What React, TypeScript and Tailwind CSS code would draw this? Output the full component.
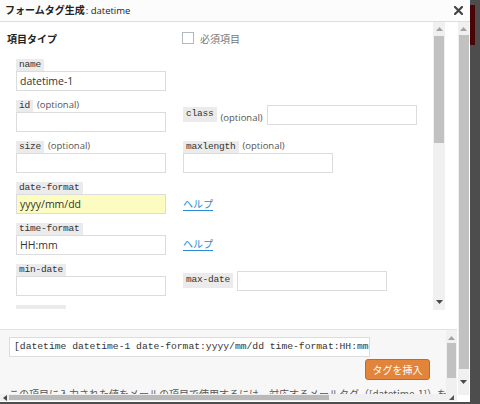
import React from 'react';

const ui = "font-['Open_Sans','Noto_Sans_CJK_JP',sans-serif]";
const jp = "font-['Noto_Sans_CJK_JP',sans-serif]";
const mono = "font-['Liberation_Mono','DejaVu_Sans_Mono',monospace]";

// small scrollbar triangle
const Arrow = ({ dir, dark }: { dir: 'up' | 'down' | 'left'; dark?: boolean }) => {
  const cls = dark ? 'fill-[#4a4a4a]' : 'fill-[#a3a3a3]';
  if (dir === 'left') {
    return (
      <svg width="4" height="6" viewBox="0 0 4 6" className={cls}>
        <polygon points="4,0 0,3 4,6" />
      </svg>
    );
  }
  return (
    <svg width="7" height="4" viewBox="0 0 7 4" className={cls}>
      {dir === 'up' ? <polygon points="0,4 3.5,0 7,4" /> : <polygon points="0,0 7,0 3.5,4" />}
    </svg>
  );
};

const Code = ({ children, className = '' }: { children: React.ReactNode; className?: string }) => (
  <span
    className={`${mono} inline-flex items-center bg-[#ebebeb] text-[#333] px-[3px] text-[9.5px] tracking-[-0.2px] ${className}`}
  >
    {children}
  </span>
);

const Optional = () => <span className={`${ui} text-[9.5px] text-[#555]`}>(optional)</span>;

const Input = ({ value, className = '' }: { value?: string; className?: string }) => (
  <div
    className={`${ui} h-[20px] border border-[#dcdcdc] px-[3px] text-[10.5px] leading-[18px] text-[#333] whitespace-nowrap overflow-hidden ${className}`}
  >
    {value}
  </div>
);

// label stacked above an input, as in the left column
const Stacked = ({
  name,
  optional,
  value,
  yellow,
}: {
  name: string;
  optional?: boolean;
  value?: string;
  yellow?: boolean;
}) => (
  <div className="flex flex-col">
    <div className="flex items-end h-[12px] gap-[4px]">
      <Code className="h-[12px]">{name}</Code>
      {optional && <Optional />}
    </div>
    <Input value={value} className={`w-[150px] ${yellow ? 'bg-[#fcfcc0]' : 'bg-white'}`} />
  </div>
);

const Help = () => (
  <a className={`${jp} text-[10px] text-[#2a8bd4] underline underline-offset-2`}>ヘルプ</a>
);

export default function App() {
  return (
    <div className="w-[480px] h-[404px] bg-[#4d4d4d] flex items-start overflow-hidden">
      <div className="w-[470px] h-[402px] bg-white flex flex-col">
        {/* header */}
        <div className="h-[22px] shrink-0 bg-[#fcfcfc] border-b border-[#dedede] flex items-center justify-between pl-[5px] pr-[7px]">
          <div className="text-[10px] text-[#222] flex items-baseline">
            <span className={`${jp} font-bold`}>フォームタグ生成</span>
            <span className={`${ui} text-[9.5px] ml-[1px]`}>: datetime</span>
          </div>
          <svg width="9" height="9" viewBox="0 0 9 9" className="stroke-[#444] mt-[-1px]">
            <path d="M1 1 L8 8 M8 1 L1 8" strokeWidth="2.2" strokeLinecap="square" />
          </svg>
        </div>

        <div className="flex-1 flex min-h-0">
          <div className="w-[457px] flex flex-col">
            {/* form area */}
            <div className="h-[288px] flex shrink-0">
              <div className="w-[433px] h-[287px] overflow-hidden pt-[8px]">
                <div className="flex items-center h-[16px]">
                  <div className={`${jp} w-[182px] pl-[7px] font-bold text-[10px] text-[#222]`}>項目タイプ</div>
                  <div className="flex items-center gap-[6px]">
                    <span className="w-[12px] h-[12px] border border-[#b4b9be] bg-white" />
                    <span className={`${jp} text-[10px] text-[#777]`}>必須項目</span>
                  </div>
                </div>

                <div className="mt-[13px] pl-[16px] flex flex-col gap-[9px]">
                  <div className="grid grid-cols-[167px_1fr] items-center">
                    <Stacked name="name" value="datetime-1" />
                    <div />
                  </div>
                  <div className="grid grid-cols-[167px_1fr] items-center">
                    <Stacked name="id" optional />
                    <div className="flex items-center mt-[-3px]">
                      <Code className="h-[15px]">class</Code>
                      <span className="ml-[4px]">
                        <Optional />
                      </span>
                      <Input className="w-[150px] bg-white ml-[4px]" />
                    </div>
                  </div>
                  <div className="grid grid-cols-[167px_1fr] items-center">
                    <Stacked name="size" optional />
                    <Stacked name="maxlength" optional />
                  </div>
                  <div className="grid grid-cols-[167px_1fr] items-end">
                    <Stacked name="date-format" value="yyyy/mm/dd" yellow />
                    <div className="h-[20px] flex items-center pb-[1px]">
                      <Help />
                    </div>
                  </div>
                  <div className="grid grid-cols-[167px_1fr] items-end">
                    <Stacked name="time-format" value="HH:mm" />
                    <div className="h-[20px] flex items-center pb-[3px]">
                      <Help />
                    </div>
                  </div>
                  <div className="grid grid-cols-[167px_1fr] items-center">
                    <Stacked name="min-date" />
                    <div className="flex items-center gap-[4px] mt-[1px]">
                      <Code className="h-[15px]">max-date</Code>
                      <Input className="w-[150px] bg-white" />
                    </div>
                  </div>
                  {/* next label, only its top edge shows above the fold */}
                  <div className="w-[50px] h-[12px] bg-[#ebebeb]" />
                </div>
              </div>

              {/* inner scrollbar */}
              <div className="w-[12px] h-full bg-[#f0f0f0] flex flex-col items-center">
                <div className="h-[14px] flex items-center justify-center">
                  <Arrow dir="up" />
                </div>
                <div className="w-[10px] h-[107px] bg-[#c1c1c1]" />
                <div className="flex-1" />
                <div className="h-[14px] flex items-center justify-center pb-[2px]">
                  <Arrow dir="down" dark />
                </div>
              </div>
              <div className="w-[12px] h-full bg-white" />
            </div>

            <div className="h-[20px] shrink-0 bg-white border-b border-[#e2e2e2]" />

            {/* tag area */}
            <div className="h-[64px] shrink-0 flex bg-[#f7f7f7]">
              <div className="w-[446px] h-full overflow-hidden pl-[9px] pt-[7px]">
                <div
                  className={`${mono} w-[361px] h-[20px] bg-white border border-[#dcdcdc] pl-[4px] text-[9.7px] leading-[18px] text-[#333] whitespace-nowrap overflow-hidden`}
                >
                  [datetime datetime-1 date-format:yyyy/mm/dd time-format:HH:mm]
                </div>
                <div className="w-[421px] flex justify-end mt-[2px]">
                  <button
                    className={`${jp} w-[65px] h-[21px] rounded-[3px] bg-[#e2843a] border border-[#c7682a] text-white text-[10px] leading-none`}
                  >
                    タグを挿入
                  </button>
                </div>
                <p className={`${jp} mt-[7px] text-[10px] leading-[14px] text-[#555] whitespace-nowrap`}>
                  この項目に入力された値をメールの項目で使用するには、対応するメールタグ（[datetime-1]）を、メールタブの項目に挿入してください。
                </p>
              </div>
              <div className="w-[11px] h-full bg-[#f0f0f0] flex flex-col items-center">
                <div className="h-[13px] flex items-center justify-center pt-[2px]">
                  <Arrow dir="up" />
                </div>
                <div className="w-[9px] h-[35px] bg-[#c1c1c1]" />
              </div>
            </div>

            {/* horizontal scrollbar */}
            <div className="h-[7px] shrink-0 flex">
              <div className="w-[446px] h-full bg-[#f0f0f0] flex items-center">
                <div className="w-[9px] flex justify-center">
                  <Arrow dir="left" dark />
                </div>
                <div className="w-[320px] h-[5px] bg-[#b9b9b9]" />
              </div>
              <div className="w-[11px] h-full bg-[#f0f0f0] flex items-end justify-center pb-[1px]">
                <svg width="5" height="5" viewBox="0 0 5 5" className="fill-[#555]">
                  <polygon points="5,0 5,5 0,5" />
                </svg>
              </div>
            </div>
          </div>

          {/* outer scrollbar */}
          <div className="w-[13px] flex flex-col">
            <div className="ml-[1px] w-[11px] h-[373px] bg-[#f0f0f0] flex flex-col items-center">
              <div className="h-[13px] flex items-center justify-center">
                <Arrow dir="up" />
              </div>
              <div className="w-[10px] h-[334px] bg-[#c1c1c1]" />
              <div className="flex-1 flex items-center justify-center">
                <Arrow dir="down" dark />
              </div>
            </div>
            <div className="flex-1 bg-white" />
          </div>
        </div>
      </div>

      {/* background window edge */}
      <div className="w-[10px] h-[404px] flex flex-col">
        <div className="h-[5px]" />
        <div className="w-[5px] h-[40px] bg-[#4a0606]" />
      </div>
    </div>
  );
}
